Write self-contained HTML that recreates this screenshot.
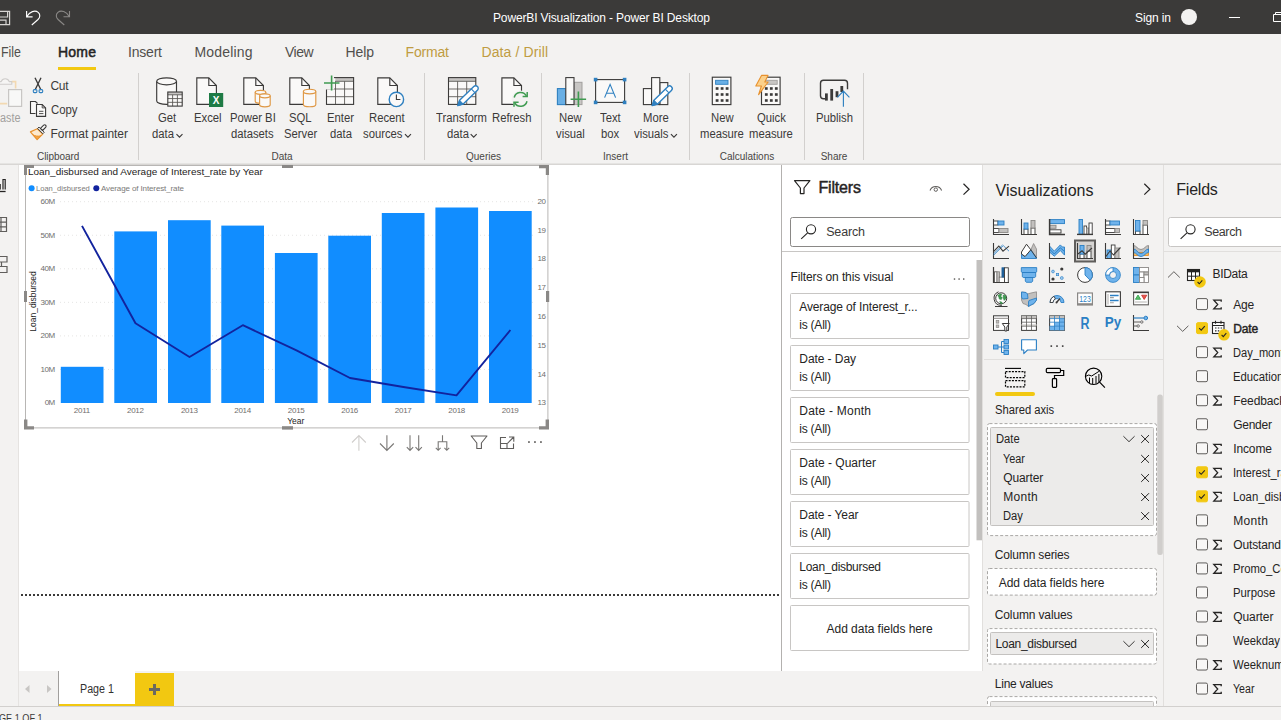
<!DOCTYPE html>
<html lang="en">
<head>
<meta charset="utf-8">
<title>PowerBI Visualization - Power BI Desktop</title>
<style>
*{box-sizing:border-box;margin:0;padding:0}
html,body{width:1281px;height:720px;overflow:hidden;background:#f3f2f1;font-family:"Liberation Sans",sans-serif;color:#252423}
#root{position:relative;width:1281px;height:720px;overflow:hidden}
.a{position:absolute;display:block}
.x{position:absolute;white-space:nowrap;display:block}
svg{overflow:visible}
</style>
</head>
<body>
<div id="root">
<!-- p1_top -->
<div class="a" style="left:0px;top:0px;width:1281px;height:34px;background:#3b3a39;"></div>
<span class="x" style="left:493.00px;top:10.00px;font-size:12px;line-height:16px;color:#ffffff;letter-spacing:-0.142px;">PowerBI Visualization - Power BI Desktop</span>
<span class="x" style="left:1135.00px;top:10.00px;font-size:12px;line-height:16px;color:#ffffff;letter-spacing:-0.115px;">Sign in</span>
<div class="a" style="left:1181px;top:9px;width:16px;height:16px;border-radius:8px;background:#f3f2f1"></div>
<div class="a" style="left:1229px;top:17px;width:11px;height:1px;background:#ffffff;"></div>
<svg class="a" style="left:1270px;top:10px;" width="11" height="14" viewBox="0 0 11 14"><path d="M3.5 4.5h9v7h-9z M5.5 4.5v-2h7" fill="none" stroke="#fff" stroke-width="1"/></svg>
<svg class="a" style="left:0px;top:0px;" width="100" height="34" viewBox="0 0 100 34"><path d="M-3 11.4H9.6V24.6H-3 M7.6 11.4V17H-3 M-3 20.2H6V24.6" fill="none" stroke="#d6d4d2" stroke-width="1.2"/><path d="M26.6 11v5.8h6 M26.9 16.5C29.6 11.6 35 9.7 38.2 12.4c2.4 2.1 1.9 5-0.2 7.1L31.8 25" fill="none" stroke="#ffffff" stroke-width="1.15" stroke-linejoin="miter"/><g transform="translate(96.1 0) scale(-1 1)"><path d="M26.6 11v5.8h6 M26.9 16.5C29.6 11.6 35 9.7 38.2 12.4c2.4 2.1 1.9 5-0.2 7.1L31.8 25" fill="none" stroke="#8a8886" stroke-width="1.1"/></g></svg>
<span class="x" style="left:0.50px;top:43.00px;font-size:14px;line-height:18px;color:#514f4c;transform:scaleX(0.8866);transform-origin:0 50%;">File</span>
<span class="x" style="left:58.00px;top:43.00px;font-size:14px;line-height:18px;color:#252423;letter-spacing:0.218px;-webkit-text-stroke:0.5px #252423;">Home</span>
<span class="x" style="left:128.00px;top:43.00px;font-size:14px;line-height:18px;color:#514f4c;letter-spacing:-0.203px;">Insert</span>
<span class="x" style="left:194.50px;top:43.00px;font-size:14px;line-height:18px;color:#514f4c;letter-spacing:0.169px;">Modeling</span>
<span class="x" style="left:285.00px;top:43.00px;font-size:14px;line-height:18px;color:#514f4c;letter-spacing:-0.464px;">View</span>
<span class="x" style="left:345.50px;top:43.00px;font-size:14px;line-height:18px;color:#514f4c;letter-spacing:-0.098px;">Help</span>
<span class="x" style="left:405.50px;top:43.00px;font-size:14px;line-height:18px;color:#c09c42;letter-spacing:-0.168px;">Format</span>
<span class="x" style="left:481.50px;top:43.00px;font-size:14px;line-height:18px;color:#c09c42;letter-spacing:0.105px;">Data / Drill</span>
<div class="a" style="left:58px;top:67px;width:38px;height:3px;background:#f2c811;"></div>
<div class="a" style="left:0px;top:163px;width:1281px;height:1px;background:#e5e4e2;"></div>
<div class="a" style="left:0px;top:164px;width:1281px;height:1px;background:#d8d6d4;"></div>
<!-- p2_ribbon -->
<svg class="a" style="left:0px;top:0px;" width="1281" height="170" viewBox="0 0 1281 170"><path d="M11.8 81.6H15.6V88.5 M-4 103.6H7.2" fill="none" stroke="#f3d9b1" stroke-width="1.6"/><path d="M-3 84.2v-2.6h4.2a4.2 4.2 0 0 1 8 0h2.6v2.6z" fill="#f6f5f4" stroke="#cfcdcb" stroke-width="1.1" stroke-linejoin="round"/><rect x="8.6" y="89.6" width="13" height="16.8" fill="#f8f8f7" stroke="#c8c6c4" stroke-width="1.2"/><path d="M35 77.8L41 90 M41 77.8L35 90" stroke="#3b3a39" stroke-width="1.35" fill="none"/><rect x="33.3" y="89.6" width="3.6" height="3" rx="1" fill="none" stroke="#2f80c0" stroke-width="1.1"/><rect x="39.1" y="89.6" width="3.6" height="3" rx="1" fill="none" stroke="#2f80c0" stroke-width="1.1"/><path d="M35.5 113.5h-5v-12h5l2 2" fill="#faf9f8" stroke="#3b3a39" stroke-width="1.1"/><path d="M36.5 104.5h5.7l3.4 3.4v8.5h-9.1z" fill="#faf9f8" stroke="#3b3a39" stroke-width="1.1"/><path d="M42.2 104.5v3.4h3.4" fill="none" stroke="#3b3a39" stroke-width="0.9"/><path d="M39 111.3h4.4M39 113.6h4.4" stroke="#3b3a39" stroke-width="0.9"/><path d="M30.4 131.9l6.9-3.2 5.4 5.3-5.6 5.6z" fill="#fde9cd" stroke="#e8912d" stroke-width="1.2" stroke-linejoin="round"/><path d="M32.6 134.6l4.6 4.6 3.4-3.4c-3 0.6-5.6 0.2-8-1.2z" fill="#f2a444" stroke="#e8912d" stroke-width="0.8" stroke-linejoin="round"/><path d="M37.6 128.4l1.4-1.3 5.2 5.2-1.4 1.4z" fill="#faf9f8" stroke="#3b3a39" stroke-width="1"/><path d="M40.4 128.3l3.3-3.2a1.5 1.5 0 0 1 2.1 2.1l-3.2 3.3z" fill="#faf9f8" stroke="#3b3a39" stroke-width="1.1" stroke-linejoin="round"/><path d="M156.7 81.3v19.6a9.9 3.5 0 0 0 19.8 0v-19.6" fill="#faf9f8" stroke="#3b3a39" stroke-width="1.15"/><ellipse cx="166.6" cy="81.3" rx="9.9" ry="3.5" fill="#faf9f8" stroke="#3b3a39" stroke-width="1.15"/><rect x="167.8" y="92" width="14.4" height="14.1" fill="#faf9f8" stroke="none"/><rect x="167.8" y="92" width="14.40" height="2.8" fill="#c6c4c2"/><path d="M172.60 94.80V106.1M177.40 94.80V106.1M167.8 94.80H182.20000000000002M167.8 98.57H182.20000000000002M167.8 102.33H182.20000000000002" fill="none" stroke="#55534f" stroke-width="0.85"/><rect x="167.8" y="92" width="14.4" height="14.1" fill="none" stroke="#3b3a39" stroke-width="1.1"/><path d="M196.79999999999998 77.89999999999999h12.000000000000002l7.6 7.6v18.799999999999997h-19.6z" fill="#faf9f8" stroke="#3b3a39" stroke-width="1.15" stroke-linejoin="miter"/><path d="M208.79999999999998 77.89999999999999v7.6h7.6" fill="none" stroke="#3b3a39" stroke-width="1.15"/><rect x="209" y="93" width="14.2" height="14" fill="#1e7b45"/><path d="M243.79999999999998 77.89999999999999h12.000000000000002l7.6 7.6v18.799999999999997h-19.6z" fill="#faf9f8" stroke="#3b3a39" stroke-width="1.15" stroke-linejoin="miter"/><path d="M255.79999999999998 77.89999999999999v7.6h7.6" fill="none" stroke="#3b3a39" stroke-width="1.15"/><path d="M255.2 92.3v9a5.3 2 0 0 0 10.6 0v-9" fill="#faf9f8" stroke="#df9845" stroke-width="1.15"/><ellipse cx="260.5" cy="92.3" rx="5.3" ry="2" fill="#faf9f8" stroke="#df9845" stroke-width="1.15"/><path d="M259.6 95.8v9a5.3 2 0 0 0 10.6 0v-9" fill="#faf9f8" stroke="#df9845" stroke-width="1.15"/><ellipse cx="264.90000000000003" cy="95.8" rx="5.3" ry="2" fill="#faf9f8" stroke="#df9845" stroke-width="1.15"/><path d="M289.8 77.89999999999999h12.000000000000002l7.6 7.6v18.799999999999997h-19.6z" fill="#faf9f8" stroke="#3b3a39" stroke-width="1.15" stroke-linejoin="miter"/><path d="M301.8 77.89999999999999v7.6h7.6" fill="none" stroke="#3b3a39" stroke-width="1.15"/><path d="M303.4 91.6v12.799999999999999a6.2 2.3 0 0 0 12.4 0v-12.799999999999999" fill="#faf9f8" stroke="#df9845" stroke-width="1.15"/><ellipse cx="309.59999999999997" cy="91.6" rx="6.2" ry="2.3" fill="#faf9f8" stroke="#df9845" stroke-width="1.15"/><rect x="326.5" y="77.6" width="27.1" height="26.8" fill="#faf9f8" stroke="none"/><rect x="335.3" y="77.6" width="18.30" height="3.7" fill="#c6c4c2"/><path d="M335.53 81.30V104.39999999999999M344.57 81.30V104.39999999999999M335.3 81.30H353.6M326.5 89.00H353.6M326.5 96.70H353.6" fill="none" stroke="#55534f" stroke-width="0.85"/><rect x="326.5" y="77.6" width="27.1" height="26.8" fill="none" stroke="#3b3a39" stroke-width="1.1"/><rect x="324" y="76" width="10" height="13.5" fill="#f3f2f1"/><path d="M331.6 75.5v15 M324 83h15.5" stroke="#3f9b51" stroke-width="1.6" fill="none"/><path d="M377.8 77.89999999999999h12.000000000000002l7.6 7.6v18.799999999999997h-19.6z" fill="#faf9f8" stroke="#3b3a39" stroke-width="1.15" stroke-linejoin="miter"/><path d="M389.8 77.89999999999999v7.6h7.6" fill="none" stroke="#3b3a39" stroke-width="1.15"/><circle cx="396.4" cy="99.4" r="7.2" fill="#faf9f8" stroke="#2f80c0" stroke-width="1.4"/><path d="M396.4 94.5v5h4" fill="none" stroke="#3b3a39" stroke-width="1.1"/><rect x="448.5" y="77.6" width="27.3" height="26.8" fill="#faf9f8" stroke="none"/><rect x="448.5" y="77.6" width="27.30" height="3.7" fill="#c6c4c2"/><path d="M457.60 81.30V104.39999999999999M466.70 81.30V104.39999999999999M448.5 81.30H475.8M448.5 89.00H475.8M448.5 96.70H475.8" fill="none" stroke="#55534f" stroke-width="0.85"/><rect x="448.5" y="77.6" width="27.3" height="26.8" fill="none" stroke="#3b3a39" stroke-width="1.1"/><path d="M473.79 86.53A2.6 2.6 0 0 1 477.41 90.27L463.20 104.00L457.80 105.60L459.59 100.26Z" fill="#ffffff" stroke="#2f80c0" stroke-width="1.4" stroke-linejoin="round"/><path d="M463.20 104.00L457.80 105.60L459.59 100.26Z" fill="#2f80c0" stroke="#2f80c0" stroke-width="1"/><path d="M471.28 88.96L474.89 92.70" stroke="#2f80c0" stroke-width="1.1"/><path d="M501.90000000000003 77.89999999999999h12.000000000000002l7.6 7.6v18.799999999999997h-19.6z" fill="#faf9f8" stroke="#3b3a39" stroke-width="1.15" stroke-linejoin="miter"/><path d="M513.9 77.89999999999999v7.6h7.6" fill="none" stroke="#3b3a39" stroke-width="1.15"/><circle cx="520.6" cy="99.4" r="9" fill="#f3f2f1"/><path d="M514.2 97.5a6.6 6.6 0 0 1 12.2-1.6 M527 101.3a6.6 6.6 0 0 1-12.2 1.6" fill="none" stroke="#3f9b51" stroke-width="1.5"/><path d="M527.2 92v4.6h-4.6 M514 106.8v-4.6h4.6" fill="none" stroke="#3f9b51" stroke-width="1.5"/><rect x="574" y="82.3" width="8" height="22.3" fill="#c8c6c4" stroke="#a19f9d" stroke-width="1"/><rect x="557.4" y="88.6" width="8.4" height="16" fill="#69afe5" stroke="#2f80c0" stroke-width="1.1"/><rect x="565.8" y="77.6" width="8.2" height="27" fill="#faf9f8" stroke="#3b3a39" stroke-width="1.1"/><path d="M578.4 91.5v15.5 M570.6 99.3h15.5" stroke="#3f9b51" stroke-width="1.6"/><rect x="595.6" y="79.6" width="29" height="22.8" fill="#faf9f8" stroke="#3b3a39" stroke-width="1.1"/><rect x="593.8000000000001" y="77.8" width="3.6" height="3.6" fill="#2f80c0"/><rect x="622.8000000000001" y="77.8" width="3.6" height="3.6" fill="#2f80c0"/><rect x="593.8000000000001" y="100.60000000000001" width="3.6" height="3.6" fill="#2f80c0"/><rect x="622.8000000000001" y="100.60000000000001" width="3.6" height="3.6" fill="#2f80c0"/><path d="M604.6 97.6l5.5-13.2l5.5 13.2 M606.5 93.2h7.2" fill="none" stroke="#2f80c0" stroke-width="1.15"/><rect x="659.8" y="82.6" width="8" height="22" fill="#faf9f8" stroke="#3b3a39" stroke-width="1.1"/><rect x="643.4" y="88.6" width="8.2" height="16" fill="#faf9f8" stroke="#3b3a39" stroke-width="1.1"/><rect x="651.6" y="77.6" width="8.2" height="27" fill="#faf9f8" stroke="#3b3a39" stroke-width="1.1"/><path d="M667.78 86.74A2.6 2.6 0 0 1 671.42 90.46L657.59 103.97L652.20 105.60L653.96 100.25Z" fill="#ffffff" stroke="#2f80c0" stroke-width="1.4" stroke-linejoin="round"/><path d="M657.59 103.97L652.20 105.60L653.96 100.25Z" fill="#2f80c0" stroke="#2f80c0" stroke-width="1"/><path d="M665.28 89.19L668.91 92.91" stroke="#2f80c0" stroke-width="1.1"/><rect x="712.3" y="77.2" width="18.6" height="27.4" fill="#faf9f8" stroke="#3b3a39" stroke-width="1.15"/><rect x="715.5999999999999" y="80.3" width="12.4" height="4" fill="#69afe5" stroke="#2f80c0" stroke-width="0.9"/><rect x="715.7" y="87.2" width="2.8" height="2.6" fill="#3b3a39"/><rect x="715.7" y="93.2" width="2.8" height="2.6" fill="#3b3a39"/><rect x="715.7" y="99.2" width="2.8" height="2.6" fill="#3b3a39"/><rect x="720.7" y="87.2" width="2.8" height="2.6" fill="#3b3a39"/><rect x="720.7" y="93.2" width="2.8" height="2.6" fill="#3b3a39"/><rect x="720.7" y="99.2" width="2.8" height="2.6" fill="#3b3a39"/><rect x="725.7" y="87.2" width="2.8" height="2.6" fill="#3b3a39"/><rect x="725.7" y="93.2" width="2.8" height="2.6" fill="#3b3a39"/><rect x="725.7" y="99.2" width="2.8" height="2.6" fill="#3b3a39"/><rect x="761.5" y="77.2" width="18.6" height="27.4" fill="#faf9f8" stroke="#3b3a39" stroke-width="1.15"/><rect x="764.8" y="80.3" width="12.4" height="4" fill="#c8c6c4" stroke="#a19f9d" stroke-width="0.9"/><rect x="764.9" y="87.2" width="2.8" height="2.6" fill="#3b3a39"/><rect x="764.9" y="93.2" width="2.8" height="2.6" fill="#3b3a39"/><rect x="764.9" y="99.2" width="2.8" height="2.6" fill="#3b3a39"/><rect x="769.9" y="87.2" width="2.8" height="2.6" fill="#3b3a39"/><rect x="769.9" y="93.2" width="2.8" height="2.6" fill="#3b3a39"/><rect x="769.9" y="99.2" width="2.8" height="2.6" fill="#3b3a39"/><rect x="774.9" y="87.2" width="2.8" height="2.6" fill="#3b3a39"/><rect x="774.9" y="93.2" width="2.8" height="2.6" fill="#3b3a39"/><rect x="774.9" y="99.2" width="2.8" height="2.6" fill="#3b3a39"/><path d="M761.5 75.4l6.5 0-3.2 6.6 3.4 0-9.6 12.6 2.8-8.6-5.6 0z" fill="#fbd08a" stroke="#e8912d" stroke-width="1.1" stroke-linejoin="round"/><path d="M826.5 98.8h-3a3 3 0 0 1-3-3v-12.5a3 3 0 0 1 3-3h21a3 3 0 0 1 3 3v6" fill="none" stroke="#3b3a39" stroke-width="1.4"/><rect x="825" y="93.4" width="2.8" height="7.2" fill="#3b3a39"/><rect x="830.3" y="89" width="2.8" height="11.6" fill="#3b3a39"/><rect x="835.6" y="91.2" width="2.8" height="6" fill="#3b3a39"/><rect x="840.4" y="86" width="2.8" height="6" fill="#3b3a39"/><path d="M843.4 106.8v-15.4 M837.4 97.4l6-6.2l6 6.2" fill="none" stroke="#2f80c0" stroke-width="1.15"/><path d="M176.47711437499999 134.2l3 3l3-3" fill="none" stroke="#3b3a39" stroke-width="1.15"/><path d="M404.94837187499996 134.2l3 3l3-3" fill="none" stroke="#3b3a39" stroke-width="1.15"/><path d="M470.677114375 134.2l3 3l3-3" fill="none" stroke="#3b3a39" stroke-width="1.15"/><path d="M670.93954125 134.2l3 3l3-3" fill="none" stroke="#3b3a39" stroke-width="1.15"/></svg>
<span class="x" style="left:-0.50px;top:110.00px;font-size:12px;line-height:16px;color:#a19f9d;transform:scaleX(0.9038);transform-origin:0 50%;">aste</span>
<span class="x" style="left:50.50px;top:78.00px;font-size:12px;line-height:16px;color:#3b3a39;letter-spacing:-0.337px;">Cut</span>
<span class="x" style="left:50.50px;top:102.00px;font-size:12px;line-height:16px;color:#3b3a39;transform:scaleX(0.9460);transform-origin:0 50%;">Copy</span>
<span class="x" style="left:50.50px;top:126.00px;font-size:12px;line-height:16px;color:#3b3a39;letter-spacing:-0.041px;">Format painter</span>
<span class="x" style="left:37.00px;top:150.00px;font-size:10px;line-height:13px;color:#484644;letter-spacing:-0.063px;">Clipboard</span>
<div class="a" style="left:138.0px;top:73px;width:1px;height:87px;background:#d2d0ce;"></div>
<div class="a" style="left:424.2px;top:73px;width:1px;height:87px;background:#d2d0ce;"></div>
<div class="a" style="left:540.9px;top:73px;width:1px;height:87px;background:#d2d0ce;"></div>
<div class="a" style="left:689.2px;top:73px;width:1px;height:87px;background:#d2d0ce;"></div>
<div class="a" style="left:804.0px;top:73px;width:1px;height:87px;background:#d2d0ce;"></div>
<div class="a" style="left:863.0px;top:73px;width:1px;height:87px;background:#d2d0ce;"></div>
<span class="x" style="left:212.76px;top:94.00px;font-size:10px;line-height:13px;color:#ffffff;font-weight:bold;">X</span>
<span class="x" style="left:158.21px;top:110.00px;font-size:12px;line-height:16px;color:#3b3a39;transform:scaleX(0.9400);transform-origin:0 50%;">Get</span>
<span class="x" style="left:152.32px;top:126.00px;font-size:12px;line-height:16px;color:#3b3a39;transform:scaleX(0.9400);transform-origin:0 50%;">data</span>
<span class="x" style="left:193.51px;top:110.00px;font-size:12px;line-height:16px;color:#3b3a39;transform:scaleX(0.9400);transform-origin:0 50%;">Excel</span>
<span class="x" style="left:229.62px;top:110.00px;font-size:12px;line-height:16px;color:#3b3a39;transform:scaleX(0.9400);transform-origin:0 50%;">Power BI</span>
<span class="x" style="left:231.18px;top:126.00px;font-size:12px;line-height:16px;color:#3b3a39;transform:scaleX(0.9400);transform-origin:0 50%;">datasets</span>
<span class="x" style="left:289.21px;top:110.00px;font-size:12px;line-height:16px;color:#3b3a39;transform:scaleX(0.9400);transform-origin:0 50%;">SQL</span>
<span class="x" style="left:283.89px;top:126.00px;font-size:12px;line-height:16px;color:#3b3a39;transform:scaleX(0.9400);transform-origin:0 50%;">Server</span>
<span class="x" style="left:327.02px;top:110.00px;font-size:12px;line-height:16px;color:#3b3a39;transform:scaleX(0.9400);transform-origin:0 50%;">Enter</span>
<span class="x" style="left:329.52px;top:126.00px;font-size:12px;line-height:16px;color:#3b3a39;transform:scaleX(0.9400);transform-origin:0 50%;">data</span>
<span class="x" style="left:369.13px;top:110.00px;font-size:12px;line-height:16px;color:#3b3a39;transform:scaleX(0.9400);transform-origin:0 50%;">Recent</span>
<span class="x" style="left:363.25px;top:126.00px;font-size:12px;line-height:16px;color:#3b3a39;transform:scaleX(0.9400);transform-origin:0 50%;">sources</span>
<span class="x" style="left:436.01px;top:110.00px;font-size:12px;line-height:16px;color:#3b3a39;transform:scaleX(0.9400);transform-origin:0 50%;">Transform</span>
<span class="x" style="left:446.52px;top:126.00px;font-size:12px;line-height:16px;color:#3b3a39;transform:scaleX(0.9400);transform-origin:0 50%;">data</span>
<span class="x" style="left:491.75px;top:110.00px;font-size:12px;line-height:16px;color:#3b3a39;transform:scaleX(0.9400);transform-origin:0 50%;">Refresh</span>
<span class="x" style="left:558.92px;top:110.00px;font-size:12px;line-height:16px;color:#3b3a39;transform:scaleX(0.9400);transform-origin:0 50%;">New</span>
<span class="x" style="left:555.78px;top:126.00px;font-size:12px;line-height:16px;color:#3b3a39;transform:scaleX(0.9400);transform-origin:0 50%;">visual</span>
<span class="x" style="left:600.16px;top:110.00px;font-size:12px;line-height:16px;color:#3b3a39;transform:scaleX(0.9400);transform-origin:0 50%;">Text</span>
<span class="x" style="left:601.41px;top:126.00px;font-size:12px;line-height:16px;color:#3b3a39;transform:scaleX(0.9400);transform-origin:0 50%;">box</span>
<span class="x" style="left:642.65px;top:110.00px;font-size:12px;line-height:16px;color:#3b3a39;transform:scaleX(0.9400);transform-origin:0 50%;">More</span>
<span class="x" style="left:634.26px;top:126.00px;font-size:12px;line-height:16px;color:#3b3a39;transform:scaleX(0.9400);transform-origin:0 50%;">visuals</span>
<span class="x" style="left:711.02px;top:110.00px;font-size:12px;line-height:16px;color:#3b3a39;transform:scaleX(0.9400);transform-origin:0 50%;">New</span>
<span class="x" style="left:700.36px;top:126.00px;font-size:12px;line-height:16px;color:#3b3a39;transform:scaleX(0.9400);transform-origin:0 50%;">measure</span>
<span class="x" style="left:756.88px;top:110.00px;font-size:12px;line-height:16px;color:#3b3a39;transform:scaleX(0.9400);transform-origin:0 50%;">Quick</span>
<span class="x" style="left:749.36px;top:126.00px;font-size:12px;line-height:16px;color:#3b3a39;transform:scaleX(0.9400);transform-origin:0 50%;">measure</span>
<span class="x" style="left:815.70px;top:110.00px;font-size:12px;line-height:16px;color:#3b3a39;transform:scaleX(0.9400);transform-origin:0 50%;">Publish</span>
<span class="x" style="left:271.44px;top:150.00px;font-size:10px;line-height:13px;color:#484644;">Data</span>
<span class="x" style="left:465.99px;top:150.00px;font-size:10px;line-height:13px;color:#484644;">Queries</span>
<span class="x" style="left:603.00px;top:150.00px;font-size:10px;line-height:13px;color:#484644;">Insert</span>
<span class="x" style="left:719.76px;top:150.00px;font-size:10px;line-height:13px;color:#484644;">Calculations</span>
<span class="x" style="left:820.66px;top:150.00px;font-size:10px;line-height:13px;color:#484644;">Share</span>
<!-- p3_canvas -->
<div class="a" style="left:0px;top:165px;width:18px;height:541px;background:#f3f2f1;"></div>
<div class="a" style="left:18px;top:165px;width:1px;height:541px;background:#e5e3e1;"></div>
<div class="a" style="left:19px;top:165px;width:762px;height:506px;background:#ffffff;"></div>
<div class="a" style="left:21px;top:594px;width:758px;height:2px;background:repeating-linear-gradient(to right,#3b3a39 0,#3b3a39 2px,transparent 2px,transparent 4px);"></div>
<svg class="a" style="left:0px;top:0px;" width="1281" height="720" viewBox="0 0 1281 720"><path d="M-3 191.5h8.6" stroke="#252423" stroke-width="1.3"/><path d="M-2 189.5v-5h2.2v5 M3 189.5v-10h2.2v10" fill="none" stroke="#252423" stroke-width="1.2"/><path d="M-4 217.5h10.5v14h-10.5 M-4 222.2h10.5 M-4 226.8h10.5 M1 217.5v14" fill="none" stroke="#605e5c" stroke-width="1.2"/><path d="M-4 256.5h11v5.5h-11 M-4 266.5h11v6h-11 M1.5 262v4.5" fill="none" stroke="#605e5c" stroke-width="1.2"/><rect x="25.5" y="165.5" width="522.4" height="262.4" fill="#ffffff" stroke="#b8b6b4" stroke-width="1"/><path d="M24 165h10v3h-7v7h-3z" fill="#8a8886"/><path d="M549 165h-10v3.2h6.8v6.8h3.2z" fill="#8a8886"/><path d="M24 429.6h10v-3.4h-6.6v-6.6h-3.4z" fill="#8a8886"/><path d="M549 429.6h-10v-3.4h6.6v-6.6h3.4z" fill="#8a8886"/><rect x="282" y="165" width="11" height="3" fill="#8a8886"/><rect x="282" y="426.2" width="11" height="3.4" fill="#8a8886"/><rect x="24" y="291" width="3" height="11" fill="#8a8886"/><rect x="546" y="291" width="3.2" height="11" fill="#8a8886"/><path d="M60 369.45H533" stroke="#e6e5e4" stroke-width="1" stroke-dasharray="1 3"/><path d="M60 335.90H533" stroke="#e6e5e4" stroke-width="1" stroke-dasharray="1 3"/><path d="M60 302.35H533" stroke="#e6e5e4" stroke-width="1" stroke-dasharray="1 3"/><path d="M60 268.80H533" stroke="#e6e5e4" stroke-width="1" stroke-dasharray="1 3"/><path d="M60 235.25H533" stroke="#e6e5e4" stroke-width="1" stroke-dasharray="1 3"/><path d="M60 201.70H533" stroke="#e6e5e4" stroke-width="1" stroke-dasharray="1 3"/><rect x="60.8" y="366.8" width="42.7" height="36.20" fill="#118dff"/><rect x="114.3" y="231.4" width="42.7" height="171.60" fill="#118dff"/><rect x="168" y="220.2" width="42.7" height="182.80" fill="#118dff"/><rect x="221.3" y="225.6" width="42.7" height="177.40" fill="#118dff"/><rect x="274.9" y="253" width="42.7" height="150.00" fill="#118dff"/><rect x="328.3" y="235.7" width="42.7" height="167.30" fill="#118dff"/><rect x="381.8" y="213" width="42.7" height="190.00" fill="#118dff"/><rect x="435.4" y="207.5" width="42.7" height="195.50" fill="#118dff"/><rect x="489" y="211" width="42.7" height="192.00" fill="#118dff"/><polyline points="82,225.9 135.5,323.3 189.5,357 242.8,325.2 296.5,350.4 350,378 403.4,387 456.5,395.4 510.4,330" fill="none" stroke="#12239e" stroke-width="1.9" stroke-linejoin="round"/><circle cx="31.6" cy="188.3" r="3" fill="#118dff"/><circle cx="96.3" cy="188.3" r="3" fill="#12239e"/><path d="M358.9 450.7v-15 M352 442.5l6.9-6.9l6.9 6.9" fill="none" stroke="#d0cecc" stroke-width="1.1"/><path d="M386.9 435.3v15 M380 443.5l6.9 6.9l6.9-6.9" fill="none" stroke="#7a7876" stroke-width="1.1"/><path d="M410 435.3v15 M406.8 447.2l3.2 3.2l3.2-3.2 M418.7 435.3v15 M415.5 447.2l3.2 3.2l3.2-3.2" fill="none" stroke="#7a7876" stroke-width="1.1"/><path d="M442.5 435.3v6.5 M438.2 450.3v-8.5h8.6v8.5 M435.8 447.9l2.4 2.4l2.4-2.4 M444.4 447.9l2.4 2.4l2.4-2.4" fill="none" stroke="#7a7876" stroke-width="1.1"/><path d="M471.2 436h15.8l-5.6 7v5.5h-4.6v-5.5z" fill="none" stroke="#605e5c" stroke-width="1.1" stroke-linejoin="round"/><path d="M506 437.5h-5.5v11h13v-5 M500.5 443.5h6.5v5 M509 437h4.8v4.8 M513.8 437l-6.3 6.3" fill="none" stroke="#605e5c" stroke-width="1.1"/><rect x="528.1" y="441.2" width="1.7" height="1.7" fill="#605e5c"/><rect x="534.1" y="441.2" width="1.7" height="1.7" fill="#605e5c"/><rect x="540.1" y="441.2" width="1.7" height="1.7" fill="#605e5c"/></svg>
<span class="x" style="left:27.90px;top:166.00px;font-size:9px;line-height:12px;color:#252423;transform:scaleX(1.1050);transform-origin:0 50%;">Loan_disbursed and Average of Interest_rate by Year</span>
<span class="x" style="left:36.00px;top:184.00px;font-size:8px;line-height:10px;color:#7a7977;transform:scaleX(0.9450);transform-origin:0 50%;">Loan_disbursed</span>
<span class="x" style="left:101.00px;top:184.00px;font-size:8px;line-height:10px;color:#7a7977;letter-spacing:-0.117px;">Average of Interest_rate</span>
<span class="x" style="left:44.64px;top:398.00px;font-size:8px;line-height:10px;color:#6f6e6c;letter-spacing:-0.556px;">0M</span>
<span class="x" style="left:40.42px;top:365.00px;font-size:8px;line-height:10px;color:#6f6e6c;letter-spacing:-0.389px;">10M</span>
<span class="x" style="left:40.42px;top:331.00px;font-size:8px;line-height:10px;color:#6f6e6c;letter-spacing:-0.389px;">20M</span>
<span class="x" style="left:40.42px;top:298.00px;font-size:8px;line-height:10px;color:#6f6e6c;letter-spacing:-0.389px;">30M</span>
<span class="x" style="left:40.42px;top:264.00px;font-size:8px;line-height:10px;color:#6f6e6c;letter-spacing:-0.389px;">40M</span>
<span class="x" style="left:40.42px;top:231.00px;font-size:8px;line-height:10px;color:#6f6e6c;letter-spacing:-0.389px;">50M</span>
<span class="x" style="left:40.42px;top:197.00px;font-size:8px;line-height:10px;color:#6f6e6c;letter-spacing:-0.389px;">60M</span>
<span class="x" style="left:537.50px;top:398.00px;font-size:8px;line-height:10px;color:#6f6e6c;letter-spacing:-0.445px;">13</span>
<span class="x" style="left:537.50px;top:370.00px;font-size:8px;line-height:10px;color:#6f6e6c;letter-spacing:-0.445px;">14</span>
<span class="x" style="left:537.50px;top:341.00px;font-size:8px;line-height:10px;color:#6f6e6c;letter-spacing:-0.445px;">15</span>
<span class="x" style="left:537.50px;top:312.00px;font-size:8px;line-height:10px;color:#6f6e6c;letter-spacing:-0.445px;">16</span>
<span class="x" style="left:537.50px;top:283.00px;font-size:8px;line-height:10px;color:#6f6e6c;letter-spacing:-0.445px;">17</span>
<span class="x" style="left:537.50px;top:254.00px;font-size:8px;line-height:10px;color:#6f6e6c;letter-spacing:-0.445px;">18</span>
<span class="x" style="left:537.50px;top:226.00px;font-size:8px;line-height:10px;color:#6f6e6c;letter-spacing:-0.445px;">19</span>
<span class="x" style="left:537.50px;top:197.00px;font-size:8px;line-height:10px;color:#6f6e6c;letter-spacing:-0.445px;">20</span>
<span class="x" style="left:73.83px;top:406.00px;font-size:8px;line-height:10px;color:#6f6e6c;letter-spacing:-0.287px;">2011</span>
<span class="x" style="left:127.05px;top:406.00px;font-size:8px;line-height:10px;color:#6f6e6c;letter-spacing:-0.297px;">2012</span>
<span class="x" style="left:180.95px;top:406.00px;font-size:8px;line-height:10px;color:#6f6e6c;letter-spacing:-0.297px;">2013</span>
<span class="x" style="left:234.25px;top:406.00px;font-size:8px;line-height:10px;color:#6f6e6c;letter-spacing:-0.297px;">2014</span>
<span class="x" style="left:287.85px;top:406.00px;font-size:8px;line-height:10px;color:#6f6e6c;letter-spacing:-0.297px;">2015</span>
<span class="x" style="left:341.35px;top:406.00px;font-size:8px;line-height:10px;color:#6f6e6c;letter-spacing:-0.297px;">2016</span>
<span class="x" style="left:394.85px;top:406.00px;font-size:8px;line-height:10px;color:#6f6e6c;letter-spacing:-0.297px;">2017</span>
<span class="x" style="left:448.35px;top:406.00px;font-size:8px;line-height:10px;color:#6f6e6c;letter-spacing:-0.297px;">2018</span>
<span class="x" style="left:501.85px;top:406.00px;font-size:8px;line-height:10px;color:#6f6e6c;letter-spacing:-0.297px;">2019</span>
<span class="x" style="left:287.21px;top:416.00px;font-size:8.5px;line-height:11px;color:#252423;">Year</span>
<span class="x" style="left:2.95px;top:296.00px;font-size:8.5px;line-height:11px;color:#252423;transform:rotate(-90deg);transform-origin:50% 50%">Loan_disbursed</span>
<div class="a" style="left:19px;top:671px;width:762px;height:35px;background:#f3f2f1;"></div>
<div class="a" style="left:58px;top:671px;width:77px;height:35px;background:#ffffff;"></div>
<div class="a" style="left:58px;top:671px;width:1px;height:35px;background:#a19f9d;"></div>
<div class="a" style="left:59px;top:704px;width:76px;height:2px;background:#f2c811;"></div>
<div class="a" style="left:135px;top:673px;width:39px;height:33px;background:#f2c811;"></div>
<div class="a" style="left:149px;top:688.2px;width:11px;height:2.4px;background:#6b695f;"></div><div class="a" style="left:153.3px;top:684px;width:2.4px;height:11px;background:#6b695f;"></div>
<span class="x" style="left:79.70px;top:681.00px;font-size:12.5px;line-height:16px;color:#323130;transform:scaleX(0.8557);transform-origin:0 50%;">Page 1</span>
<svg class="a" style="left:20px;top:680px;" width="40" height="18" viewBox="0 0 40 18"><path d="M9.5 5v8l-4.5-4z M27 5v8l4.5-4z" fill="#c8c6c4"/></svg>
<div class="a" style="left:0px;top:706px;width:1281px;height:14px;background:#f3f2f1;"></div>
<div class="a" style="left:0px;top:706px;width:1281px;height:1px;background:#d2d0ce;"></div>
<span class="x" style="left:-1.00px;top:711.00px;font-size:11px;line-height:14px;color:#3b3a39;transform:scaleX(0.8293);transform-origin:0 50%;">GE 1 OF 1</span>
<!-- p4_filters -->
<div class="a" style="left:781px;top:165px;width:202px;height:506px;background:#ffffff;"></div>
<div class="a" style="left:781px;top:165px;width:1px;height:506px;background:#b3b1af;"></div>
<div class="a" style="left:982px;top:165px;width:1px;height:541px;background:#e1dfdd;"></div>
<div class="a" style="left:781px;top:671px;width:202px;height:35px;background:#f3f2f1;"></div>
<svg class="a" style="left:0px;top:0px;" width="1281" height="720" viewBox="0 0 1281 720"><path d="M794.5 180.6h15.4l-5.9 7.4v5.6h-3.6v-5.6z" fill="none" stroke="#252423" stroke-width="1.2" stroke-linejoin="round"/><path d="M930 190.5a6.2 6.2 0 0 1 11.6 0" fill="none" stroke="#605e5c" stroke-width="1.1"/><circle cx="935.8" cy="189.6" r="1.7" fill="none" stroke="#605e5c" stroke-width="1"/><path d="M963.5 183.8l5.6 5.4l-5.6 5.4" fill="none" stroke="#252423" stroke-width="1.2"/><rect x="790.5" y="217.5" width="179" height="29" rx="2" fill="#ffffff" stroke="#8a8886" stroke-width="1"/><circle cx="811" cy="229.3" r="4.6" fill="none" stroke="#252423" stroke-width="1.1"/><path d="M807.6 232.8l-6.4 6" stroke="#252423" stroke-width="1.1"/><path d="M782 251.5H982" stroke="#c8c6c4" stroke-width="1"/><rect x="976.5" y="260" width="5.5" height="280.3" fill="#c2c0be"/><rect x="953.8" y="278.3" width="1.4" height="1.5" fill="#605e5c"/><rect x="958.4" y="278.3" width="1.4" height="1.5" fill="#605e5c"/><rect x="963.0" y="278.3" width="1.4" height="1.5" fill="#605e5c"/><rect x="790.5" y="293.5" width="178.5" height="45" rx="1" fill="#ffffff" stroke="#c8c6c4" stroke-width="1"/><rect x="790.5" y="345.5" width="178.5" height="45" rx="1" fill="#ffffff" stroke="#c8c6c4" stroke-width="1"/><rect x="790.5" y="397.5" width="178.5" height="45" rx="1" fill="#ffffff" stroke="#c8c6c4" stroke-width="1"/><rect x="790.5" y="449.5" width="178.5" height="45" rx="1" fill="#ffffff" stroke="#c8c6c4" stroke-width="1"/><rect x="790.5" y="501.5" width="178.5" height="45" rx="1" fill="#ffffff" stroke="#c8c6c4" stroke-width="1"/><rect x="790.5" y="553.5" width="178.5" height="45" rx="1" fill="#ffffff" stroke="#c8c6c4" stroke-width="1"/><rect x="790.5" y="605.5" width="178.5" height="45" rx="1" fill="#ffffff" stroke="#c8c6c4" stroke-width="1"/></svg>
<span class="x" style="left:818.50px;top:177.00px;font-size:16px;line-height:21px;color:#252423;letter-spacing:-0.176px;-webkit-text-stroke:0.45px #252423;">Filters</span>
<span class="x" style="left:826.20px;top:224.00px;font-size:12.5px;line-height:16px;color:#3b3a39;letter-spacing:-0.161px;">Search</span>
<span class="x" style="left:790.50px;top:269.00px;font-size:12px;line-height:16px;color:#252423;letter-spacing:-0.118px;">Filters on this visual</span>
<span class="x" style="left:799.30px;top:299.00px;font-size:12px;line-height:16px;color:#252423;letter-spacing:-0.130px;">Average of Interest_r...</span>
<span class="x" style="left:799.30px;top:317.00px;font-size:12px;line-height:16px;color:#252423;letter-spacing:-0.233px;">is (All)</span>
<span class="x" style="left:799.30px;top:351.00px;font-size:12px;line-height:16px;color:#252423;letter-spacing:-0.072px;">Date - Day</span>
<span class="x" style="left:799.30px;top:369.00px;font-size:12px;line-height:16px;color:#252423;letter-spacing:-0.233px;">is (All)</span>
<span class="x" style="left:799.30px;top:403.00px;font-size:12px;line-height:16px;color:#252423;letter-spacing:0.212px;">Date - Month</span>
<span class="x" style="left:799.30px;top:421.00px;font-size:12px;line-height:16px;color:#252423;letter-spacing:-0.233px;">is (All)</span>
<span class="x" style="left:799.30px;top:455.00px;font-size:12px;line-height:16px;color:#252423;">Date - Quarter</span>
<span class="x" style="left:799.30px;top:473.00px;font-size:12px;line-height:16px;color:#252423;letter-spacing:-0.233px;">is (All)</span>
<span class="x" style="left:799.30px;top:507.00px;font-size:12px;line-height:16px;color:#252423;letter-spacing:-0.084px;">Date - Year</span>
<span class="x" style="left:799.30px;top:525.00px;font-size:12px;line-height:16px;color:#252423;letter-spacing:-0.233px;">is (All)</span>
<span class="x" style="left:799.30px;top:559.00px;font-size:12px;line-height:16px;color:#252423;letter-spacing:-0.285px;">Loan_disbursed</span>
<span class="x" style="left:799.30px;top:577.00px;font-size:12px;line-height:16px;color:#252423;letter-spacing:-0.233px;">is (All)</span>
<span class="x" style="left:826.60px;top:621.00px;font-size:12px;line-height:16px;color:#252423;letter-spacing:-0.039px;">Add data fields here</span>
<!-- p4b_vizpane -->
<div class="a" style="left:983px;top:165px;width:181px;height:541px;background:#f3f2f1;"></div>
<div class="a" style="left:1163px;top:165px;width:1px;height:541px;background:#e1dfdd;"></div>
<div class="a" style="left:983px;top:165px;width:181px;height:541px;overflow:hidden"><svg class="a" style="left:-983px;top:-165px;" width="1281" height="720" viewBox="0 0 1281 720"><path d="M1144.3 183.8l5.6 5.4l-5.6 5.4" fill="none" stroke="#252423" stroke-width="1.2"/><path d="M984 359.5H1163" stroke="#e1dfdd" stroke-width="1"/><path d="M1005 368.4h16" stroke="#000" stroke-width="1.1"/><rect x="1005.5" y="371.6" width="19.3" height="6" fill="none" stroke="#000" stroke-width="1.2" stroke-dasharray="2 1.2"/><rect x="1005.5" y="380.6" width="19.3" height="6.2" fill="none" stroke="#000" stroke-width="1.2" stroke-dasharray="2 1.2"/><rect x="1046.3" y="368.4" width="14.2" height="4.2" rx="1.2" fill="none" stroke="#000" stroke-width="1.2"/><path d="M1060.5 370.5h3.2v5h-9.2v3" fill="none" stroke="#000" stroke-width="1.2"/><rect x="1052.4" y="378.6" width="4.2" height="8.8" rx="0.8" fill="none" stroke="#000" stroke-width="1.2"/><circle cx="1093.6" cy="376.3" r="8.2" fill="none" stroke="#000" stroke-width="1.1"/><path d="M1099.6 382.2l5.3 5.4" stroke="#000" stroke-width="1.2"/><path d="M1085.6 376.4l3.1-1.4 3 1 7.2-4.6" fill="none" stroke="#000" stroke-width="1"/><path d="M1089.5 377.5v5.4 M1092.7 378v6 M1096 376v7.7 M1098.9 374v8" stroke="#000" stroke-width="1"/><rect x="1157.3" y="394.5" width="5.5" height="160.5" rx="2.5" fill="#d0cecc"/><rect x="987.5" y="423.6" width="169" height="112" rx="2" fill="#ffffff" stroke="#a9a7a5" stroke-width="1" stroke-dasharray="3 2"/><rect x="990.5" y="427.5" width="163" height="98" rx="1" fill="#ecebea" stroke="#c4c2c0" stroke-width="1"/><path d="M1123.4 436.2l5.6 5.5l5.6-5.5" fill="none" stroke="#3b3a39" stroke-width="1"/><path d="M1141.1999999999998 435.1l7.8 7.8 M1149.0 435.1l-7.8 7.8" stroke="#252423" stroke-width="1"/><path d="M1141.1999999999998 455.0l7.8 7.8 M1149.0 455.0l-7.8 7.8" stroke="#252423" stroke-width="1"/><path d="M1141.1999999999998 474.1l7.8 7.8 M1149.0 474.1l-7.8 7.8" stroke="#252423" stroke-width="1"/><path d="M1141.1999999999998 493.20000000000005l7.8 7.8 M1149.0 493.20000000000005l-7.8 7.8" stroke="#252423" stroke-width="1"/><path d="M1141.1999999999998 512.2l7.8 7.8 M1149.0 512.2l-7.8 7.8" stroke="#252423" stroke-width="1"/><rect x="987.5" y="568.5" width="169" height="26.6" rx="2" fill="#ffffff" stroke="#a9a7a5" stroke-width="1" stroke-dasharray="3 2"/><rect x="987.5" y="628.6" width="169" height="35.4" rx="2" fill="#ffffff" stroke="#a9a7a5" stroke-width="1" stroke-dasharray="3 2"/><rect x="990.5" y="632.5" width="163" height="22" rx="1" fill="#ecebea" stroke="#c4c2c0" stroke-width="1"/><path d="M1123.4 641.2l5.6 5.5l5.6-5.5" fill="none" stroke="#3b3a39" stroke-width="1"/><path d="M1141.1999999999998 640.1l7.8 7.8 M1149.0 640.1l-7.8 7.8" stroke="#252423" stroke-width="1"/><rect x="987.5" y="696.6" width="169" height="30" rx="2" fill="#ffffff" stroke="#a9a7a5" stroke-width="1" stroke-dasharray="3 2"/><rect x="990.5" y="701.5" width="163" height="22" rx="1" fill="#ecebea" stroke="#c4c2c0" stroke-width="1"/></svg></div>
<div class="a" style="left:995px;top:392px;width:40px;height:4px;background:#f2c811;border-radius:2px;"></div>
<span class="x" style="left:995.50px;top:180.00px;font-size:16px;line-height:21px;color:#252423;letter-spacing:0.035px;">Visualizations</span>
<span class="x" style="left:994.80px;top:402.00px;font-size:12px;line-height:16px;color:#252423;transform:scaleX(0.9342);transform-origin:0 50%;">Shared axis</span>
<span class="x" style="left:995.50px;top:431.00px;font-size:12px;line-height:16px;color:#252423;transform:scaleX(0.9330);transform-origin:0 50%;">Date</span>
<span class="x" style="left:1003.20px;top:451.00px;font-size:12px;line-height:16px;color:#252423;transform:scaleX(0.9050);transform-origin:0 50%;">Year</span>
<span class="x" style="left:1003.20px;top:470.00px;font-size:12px;line-height:16px;color:#252423;letter-spacing:-0.095px;">Quarter</span>
<span class="x" style="left:1003.20px;top:489.00px;font-size:12px;line-height:16px;color:#252423;letter-spacing:0.309px;">Month</span>
<span class="x" style="left:1003.20px;top:508.00px;font-size:12px;line-height:16px;color:#252423;transform:scaleX(0.9300);transform-origin:0 50%;">Day</span>
<span class="x" style="left:994.80px;top:547.00px;font-size:12px;line-height:16px;color:#252423;letter-spacing:-0.166px;">Column series</span>
<span class="x" style="left:998.70px;top:575.00px;font-size:12px;line-height:16px;color:#252423;letter-spacing:-0.050px;">Add data fields here</span>
<span class="x" style="left:994.80px;top:607.00px;font-size:12px;line-height:16px;color:#252423;letter-spacing:-0.139px;">Column values</span>
<span class="x" style="left:995.50px;top:636.00px;font-size:12px;line-height:16px;color:#252423;letter-spacing:-0.300px;">Loan_disbursed</span>
<span class="x" style="left:994.80px;top:676.00px;font-size:12px;line-height:16px;color:#252423;letter-spacing:-0.251px;">Line values</span>
<!-- p5_vizicons -->
<svg class="a" style="left:0px;top:0px;" width="1281" height="720" viewBox="0 0 1281 720"><g transform="translate(993 219)"><rect x="0.5" y="2" width="4.5" height="4" fill="#ffffff" stroke="#3b3a39" stroke-width="0.9"/><rect x="5" y="2" width="6" height="4" fill="#6fb3ec" stroke="#2b7fc4" stroke-width="0.9"/><rect x="0.5" y="9.5" width="5.5" height="4" fill="#ffffff" stroke="#3b3a39" stroke-width="0.9"/><rect x="6" y="9.5" width="9" height="4" fill="#c2c0be" stroke="#8a8886" stroke-width="0.9"/><path d="M0.5 0v15.5H16" fill="none" stroke="#3b3a39" stroke-width="1.1" /></g><g transform="translate(1021 219)"><rect x="3" y="10" width="4" height="5.5" fill="#ffffff" stroke="#3b3a39" stroke-width="0.9"/><rect x="3" y="4" width="4" height="6" fill="#6fb3ec" stroke="#2b7fc4" stroke-width="0.9"/><rect x="10" y="9" width="4" height="6.5" fill="#ffffff" stroke="#3b3a39" stroke-width="0.9"/><rect x="10" y="1.5" width="4" height="7.5" fill="#c2c0be" stroke="#8a8886" stroke-width="0.9"/><path d="M0.5 0v15.5H16" fill="none" stroke="#3b3a39" stroke-width="1.1" /></g><g transform="translate(1049 219)"><rect x="0.5" y="0.6" width="15" height="4" fill="#6fb3ec" stroke="#2b7fc4" stroke-width="0.9"/><rect x="0.5" y="6.3" width="6.5" height="3" fill="#c2c0be" stroke="#8a8886" stroke-width="0.9"/><rect x="0.5" y="10.8" width="11.5" height="3.2" fill="#ffffff" stroke="#3b3a39" stroke-width="0.9"/><path d="M0.6 0v15.4H16" fill="none" stroke="#3b3a39" stroke-width="1.5" /></g><g transform="translate(1077 219)"><rect x="2" y="0.5" width="3.5" height="15" fill="#6fb3ec" stroke="#2b7fc4" stroke-width="0.9"/><rect x="7" y="7" width="2.5" height="8.5" fill="#ffffff" stroke="#3b3a39" stroke-width="0.9"/><rect x="9.5" y="9" width="2.5" height="6.5" fill="#c2c0be" stroke="#8a8886" stroke-width="0.9"/><rect x="12" y="4" width="3.2" height="11.5" fill="#ffffff" stroke="#3b3a39" stroke-width="0.9"/><path d="M0 15.4H16" fill="none" stroke="#3b3a39" stroke-width="1.4" /></g><g transform="translate(1105 219)"><rect x="0.5" y="2" width="4.5" height="4" fill="#ffffff" stroke="#3b3a39" stroke-width="0.9"/><rect x="5" y="2" width="9.5" height="4" fill="#6fb3ec" stroke="#2b7fc4" stroke-width="0.9"/><rect x="0.5" y="9.5" width="9.5" height="4" fill="#ffffff" stroke="#3b3a39" stroke-width="0.9"/><rect x="10" y="9.5" width="4.5" height="4" fill="#c2c0be" stroke="#8a8886" stroke-width="0.9"/><path d="M0.5 0v15.5H16" fill="none" stroke="#3b3a39" stroke-width="1.1" /></g><g transform="translate(1133 219)"><rect x="2.5" y="12" width="4.5" height="3.5" fill="#ffffff" stroke="#3b3a39" stroke-width="0.9"/><rect x="2.5" y="1.5" width="4.5" height="10.5" fill="#6fb3ec" stroke="#2b7fc4" stroke-width="0.9"/><rect x="10" y="6" width="4.5" height="9.5" fill="#ffffff" stroke="#3b3a39" stroke-width="0.9"/><rect x="10" y="1.5" width="4.5" height="4.5" fill="#c2c0be" stroke="#8a8886" stroke-width="0.9"/><path d="M0.5 0v15.5H16" fill="none" stroke="#3b3a39" stroke-width="1.1" /></g><g transform="translate(993 243)"><path d="M0.5 0v15.5H16" fill="none" stroke="#3b3a39" stroke-width="1.1" /><path d="M0.5 12.3L10.3 2.6 16 8.2 M0.5 10.8L9.6 1.9" fill="none" stroke="#2b7fc4" stroke-width="0.8" /><path d="M0.5 8.6L5.8 3 10 8.2 16 3.2" fill="none" stroke="#3b3a39" stroke-width="1.1" /></g><g transform="translate(1021 243)"><path d="M9.8 6.8L12.6 0.5 15.5 6.1v9H9.8z" fill="#c2c0be" stroke="#8a8886" stroke-width="0.8" /><path d="M0.5 15.5v-4.5l3.6 2.5 5.7-6.7 5.7 8v0.7z" fill="#6fb3ec" stroke="#2b7fc4" stroke-width="0.9" /><path d="M0.5 9L5.5 1.2 9.8 6.8 4.1 13.5 0.5 11z" fill="#ffffff" stroke="#3b3a39" stroke-width="1.0" stroke-linejoin="round"/><path d="M9.8 6.8L15.5 15" fill="none" stroke="#3b3a39" stroke-width="0.9" /></g><g transform="translate(1049 243)"><path d="M0.5 3L5.3 8.2 11.3 1.9 13.4 4H15.5V12.1L11.3 7.5 5.3 13.2 0.5 9z" fill="#6fb3ec" stroke="#2b7fc4" stroke-width="0.9" /><path d="M0.5 6L5.3 11 11.3 4.8 15.5 8.5" fill="none" stroke="#2b7fc4" stroke-width="1" /><path d="M0.5 0v15.5H16" fill="none" stroke="#3b3a39" stroke-width="1.1" /></g><rect x="1075" y="240.5" width="20" height="21" fill="#d6d4d2" stroke="#605e5c" stroke-width="2"/><g transform="translate(1077 243)"><rect x="3" y="11" width="4" height="4.5" fill="#ffffff" stroke="#3b3a39" stroke-width="0.9"/><rect x="3" y="2.5" width="4" height="8.5" fill="#6fb3ec" stroke="#2b7fc4" stroke-width="0.9"/><rect x="10" y="8" width="4" height="7.5" fill="#ffffff" stroke="#3b3a39" stroke-width="0.9"/><rect x="10" y="2.5" width="4" height="5.5" fill="#c2c0be" stroke="#8a8886" stroke-width="0.9"/><path d="M0.5 0v15.5H16" fill="none" stroke="#3b3a39" stroke-width="1.1" /><path d="M1 11l4-3.2 3.2 3.4L15 5" fill="none" stroke="#3b3a39" stroke-width="1.1" /></g><g transform="translate(1105 243)"><rect x="2" y="7" width="4" height="8.5" fill="#6fb3ec" stroke="#2b7fc4" stroke-width="0.9"/><rect x="6.3" y="2" width="3.7" height="13.5" fill="#ffffff" stroke="#3b3a39" stroke-width="0.9"/><rect x="10" y="5" width="4" height="10.5" fill="#c2c0be" stroke="#8a8886" stroke-width="0.9"/><path d="M0.5 0v15.5H16" fill="none" stroke="#3b3a39" stroke-width="1.1" /><path d="M0.5 14L5 8l3.5 4L15.5 4.5" fill="none" stroke="#3b3a39" stroke-width="1.1" /></g><g transform="translate(1133 243)"><path d="M0.5 2.5c3 0 4 4 7.5 4s4.5-4 7.5-4v5c-3 0-4 3-7.5 3s-4.5-3-7.5-3z" fill="#c2c0be" stroke="#8a8886" stroke-width="0.9" /><path d="M0.5 9.5h15v3h-15z" fill="#f5b95f" stroke="#e8912d" stroke-width="0.9" /><path d="M0.5 6c3 0 4 4.5 7.5 4.5s4.5-4.5 7.5-4.5v3.5c-3 0-4 4-7.5 4s-4.5-4-7.5-4z" fill="#6fb3ec" stroke="#2b7fc4" stroke-width="0.9" /><path d="M0.5 0v15.5H16" fill="none" stroke="#3b3a39" stroke-width="1.1" /></g><g transform="translate(993 267)"><rect x="1.5" y="4.8" width="2.5" height="10.7" fill="#ffffff" stroke="#605e5c" stroke-width="0.9"/><rect x="4" y="4.8" width="2.5" height="10.7" fill="#c2c0be" stroke="#8a8886" stroke-width="0.9"/><rect x="6.2" y="10.1" width="5.3" height="5.4" fill="#ffffff" stroke="#605e5c" stroke-width="0.7"/><rect x="9" y="0.8" width="2.5" height="9.3" fill="#1f5f99" stroke="#1f5f99" stroke-width="0.9"/><rect x="11.5" y="0.8" width="3.8" height="14.7" fill="#ffffff" stroke="#3b3a39" stroke-width="0.9"/><path d="M0.5 0v15.5H16" fill="none" stroke="#3b3a39" stroke-width="1.2" /></g><g transform="translate(1021 267)"><path d="M0.3 0.6h15.4v4.2l-0.8 0.7H1.1l-0.8-0.7z M1.3 5.5h13.4v4.2l-0.9 0.8H2.2l-0.9-0.8z M4.3 10.5h7.4v3.6l-1 1.2H5.3l-1-1.2z" fill="#6fb3ec" stroke="#2b7fc4" stroke-width="0.9" stroke-linejoin="round"/></g><g transform="translate(1049 267)"><path d="M0.5 0v15.5H16" fill="none" stroke="#3b3a39" stroke-width="1.1" /><circle cx="4" cy="4.5" r="1.4" fill="#9cc8ee" stroke="#2b7fc4" stroke-width="0.6"/><rect x="7.3" y="6.3" width="2.4" height="2.4" fill="#9cc8ee" stroke="#2b7fc4" stroke-width="0.6"/><circle cx="12.8" cy="2" r="1.6" fill="#3b3a39"/><circle cx="4" cy="12" r="1.6" fill="#3b3a39"/><circle cx="12.8" cy="11" r="1.5" fill="#9cc8ee" stroke="#2b7fc4" stroke-width="0.6"/></g><g transform="translate(1077 267)"><circle cx="8" cy="8" r="7.4" fill="#ffffff" stroke="#3b3a39" stroke-width="1"/><path d="M8 8V0.6A7.4 7.4 0 0 1 13.2 13.3z" fill="#6fb3ec" stroke="#2b7fc4" stroke-width="0.9" /></g><g transform="translate(1105 267)"><circle cx="8" cy="8" r="5.5" fill="none" stroke="#6fb3ec" stroke-width="3.8"/><circle cx="8" cy="8" r="7.4" fill="none" stroke="#2b7fc4" stroke-width="0.8"/><circle cx="8" cy="8" r="3.5" fill="none" stroke="#2b7fc4" stroke-width="0.8"/><path d="M0.6 8A7.4 7.4 0 0 1 8 0.6V4.5A3.5 3.5 0 0 0 4.5 8z" fill="#ffffff" stroke="#2b7fc4" stroke-width="0.8" /></g><g transform="translate(1133 267)"><rect x="0.5" y="0.5" width="6" height="7.5" fill="#6fb3ec" stroke="#2b7fc4" stroke-width="0.9"/><rect x="0.5" y="8" width="6" height="7.5" fill="#6fb3ec" stroke="#2b7fc4" stroke-width="0.9"/><rect x="6.5" y="0.5" width="9" height="4.5" fill="#ffffff" stroke="#8a8886" stroke-width="0.9"/><rect x="6.5" y="5" width="4.5" height="5.5" fill="#ffffff" stroke="#8a8886" stroke-width="0.9"/><rect x="11" y="5" width="4.5" height="3" fill="#c2c0be" stroke="#8a8886" stroke-width="0.9"/><rect x="11" y="8" width="4.5" height="7.5" fill="#ffffff" stroke="#8a8886" stroke-width="0.9"/><rect x="6.5" y="10.5" width="4.5" height="5" fill="#ffffff" stroke="#8a8886" stroke-width="0.9"/></g><g transform="translate(993 291)"><circle cx="8.2" cy="7.3" r="5.5" fill="#ffffff" stroke="#3b3a39" stroke-width="1"/><path d="M4.8 4.6c1-1.5 3-2 4-1.5l-1 2.5 1.5 1-1 2-2-0.5-0.5-2z M10.2 4l2.5 0.5 0.5 3-2 2-1-2.5z M6.7 10.5l2 0.5 1 1.5-2 0.3z" fill="#3f9b51" stroke="#2e7d3e" stroke-width="0.5" /><path d="M5.5 0.8A7 7 0 0 0 8.2 14.3 M8.2 13.5v2 M2 15.5h12.5" fill="none" stroke="#3b3a39" stroke-width="1.0" /></g><g transform="translate(1021 291)"><path d="M0.5 1L5 1.5 6.5 3 10 2 15.5 0.8V9L13 12.5 9 14.5 7.5 15.5 5 13.5 2 12.5 0.5 9z" fill="#c2c0be" stroke="#8a8886" stroke-width="0.8" stroke-linejoin="round"/><path d="M0.5 1L5 1.5 6.5 3 7 7.5 1.5 8 0.5 6z M8 9.5L15.5 7V9L13 12.5 9 14.5 7.5 15.5 7.5 11z" fill="#6fb3ec" stroke="#2b7fc4" stroke-width="0.9" stroke-linejoin="round"/></g><g transform="translate(1049 291)"><path d="M1 11.5a7 7 0 0 1 14 0h-3a4 4 0 0 0-8 0z" fill="#6fb3ec" stroke="#2b7fc4" stroke-width="0.9" /><path d="M1 11.5a7 7 0 0 1 4-6.3l1.3 2.7a4 4 0 0 0-2.3 3.6z" fill="#ffffff" stroke="#3b3a39" stroke-width="0.9" /><path d="M7.5 11.5l3.5-4" fill="none" stroke="#3b3a39" stroke-width="1.3" /><circle cx="7.5" cy="11.5" r="1" fill="#3b3a39"/></g><g transform="translate(1077 291)"><rect x="0.6" y="2" width="14.8" height="12" fill="#ffffff" stroke="#8a8886" stroke-width="1.2"/><rect x="0.6" y="12.2" width="14.8" height="1.8" fill="#8a8886"/><text x="8" y="11" font-size="8.5" text-anchor="middle" fill="#2b7fc4" font-family="Liberation Sans, sans-serif" textLength="11.5" lengthAdjust="spacingAndGlyphs">123</text></g><g transform="translate(1105 291)"><rect x="0.6" y="0.8" width="14.8" height="14.6" fill="#ffffff" stroke="#3b3a39" stroke-width="1.1"/><path d="M3 3v10.5" fill="none" stroke="#c2c0be" stroke-width="1.3" /><path d="M5 4.4h8.6 M5 9.6h8.6" fill="none" stroke="#2b7fc4" stroke-width="1.5" /><path d="M5 6.6h3.8 M5 11.8h3.8" fill="none" stroke="#a19f9d" stroke-width="1.1" /></g><g transform="translate(1133 291)"><rect x="0.6" y="1.3" width="14.8" height="12.5" fill="#ffffff" stroke="#605e5c" stroke-width="1.1"/><path d="M0.2 1.4h15.6" fill="none" stroke="#3b3a39" stroke-width="1.5" /><path d="M2.4 8.3l2.6-4.3 2.6 4.3z" fill="#5cbf6a" stroke="#2e9e48" stroke-width="0.8" /><path d="M8.6 4.2l2.6 4.3 2.6-4.3z" fill="#e8574f" stroke="#c8302a" stroke-width="0.8" /><path d="M2 11h11.8" fill="none" stroke="#c2c0be" stroke-width="1.2" /></g><g transform="translate(993 315)"><rect x="0.5" y="0.8" width="15" height="14.6" fill="#ffffff" stroke="#3b3a39" stroke-width="1.0"/><path d="M0.5 3.3h15" fill="none" stroke="#8a8886" stroke-width="1" /><rect x="3.2" y="5.5" width="2.6" height="2.6" fill="#c2c0be" stroke="#8a8886" stroke-width="0.7"/><rect x="3.2" y="10" width="2.6" height="2.6" fill="#c2c0be" stroke="#8a8886" stroke-width="0.7"/><path d="M9.3 8.5h7l-2.5 3.5v4h-2v-4z" fill="#ffffff" stroke="#3b3a39" stroke-width="1.0" stroke-linejoin="round"/></g><g transform="translate(1021 315)"><rect x="0.6" y="0.8" width="14.8" height="14.6" fill="#ffffff" stroke="#3b3a39" stroke-width="1.0"/><rect x="0.6" y="0.8" width="14.8" height="2.6" fill="#c2c0be"/><rect x="0.6" y="9" width="14.8" height="2" fill="#e1dfdd"/><path d="M0.6 3.6h14.8 M0.6 7.2h14.8 M0.6 11.2h14.8 M5.5 0.8v14.6 M10.5 0.8v14.6" fill="none" stroke="#605e5c" stroke-width="0.8" /></g><g transform="translate(1049 315)"><rect x="0.6" y="0.8" width="14.8" height="14.6" fill="#ffffff" stroke="#3b3a39" stroke-width="1.0"/><rect x="0.6" y="0.8" width="14.8" height="2.6" fill="#c2c0be"/><rect x="10.5" y="3.6" width="4.9" height="3.6" fill="#6fb3ec"/><rect x="5.5" y="7.2" width="9.9" height="4" fill="#6fb3ec"/><rect x="0.6" y="11.2" width="14.8" height="4.2" fill="#6fb3ec"/><path d="M0.6 3.6h14.8 M0.6 7.2h14.8 M0.6 11.2h14.8 M5.5 0.8v14.6 M10.5 0.8v14.6" fill="none" stroke="#2b7fc4" stroke-width="0.8" /></g><g transform="translate(1077 315)"><text x="8" y="13.8" font-size="16" font-weight="bold" text-anchor="middle" fill="#2b7fc4" font-family="Liberation Sans, sans-serif" textLength="9" lengthAdjust="spacingAndGlyphs">R</text></g><g transform="translate(1105 315)"><text x="8" y="11.6" font-size="14.5" font-weight="bold" text-anchor="middle" fill="#2b7fc4" font-family="Liberation Sans, sans-serif" textLength="16.5" lengthAdjust="spacingAndGlyphs">Py</text></g><g transform="translate(1133 315)"><path d="M0.5 0v15.5H16" fill="none" stroke="#3b3a39" stroke-width="1.1" /><path d="M0.5 3h10.5" fill="none" stroke="#2b7fc4" stroke-width="1.2" /><circle cx="12.8" cy="3" r="1.8" fill="#6fb3ec" stroke="#2b7fc4" stroke-width="1"/><path d="M0.5 7h7 M0.5 11h3.5" fill="none" stroke="#605e5c" stroke-width="1" /><circle cx="8.8" cy="7" r="1.2" fill="#ffffff" stroke="#605e5c" stroke-width="0.9"/><circle cx="5.2" cy="11" r="1.2" fill="#ffffff" stroke="#605e5c" stroke-width="0.9"/></g><g transform="translate(993 339)"><path d="M5 8h3.5 M12 2.5H8.5v11H12 M8.5 8H12" fill="none" stroke="#2b7fc4" stroke-width="1" /><rect x="0.5" y="6" width="4.5" height="4" fill="#6fb3ec" stroke="#2b7fc4" stroke-width="0.9"/><rect x="11" y="0.5" width="4.5" height="4" fill="#6fb3ec" stroke="#2b7fc4" stroke-width="0.9"/><rect x="11" y="6" width="4.5" height="4" fill="#6fb3ec" stroke="#2b7fc4" stroke-width="0.9"/><rect x="11" y="11.5" width="4.5" height="4" fill="#6fb3ec" stroke="#2b7fc4" stroke-width="0.9"/></g><g transform="translate(1021 339)"><path d="M0.6 0.8h14.8v10.2H6.5l-3.7 3.6v-3.6H0.6z" fill="#ffffff" stroke="#2b7fc4" stroke-width="1.1" stroke-linejoin="round"/></g><g transform="translate(1049 339)"><rect x="1.5" y="6.3" width="1.6" height="1.6" fill="#3b3a39"/><rect x="7.2" y="6.3" width="1.6" height="1.6" fill="#3b3a39"/><rect x="12.9" y="6.3" width="1.6" height="1.6" fill="#3b3a39"/></g></svg>
<!-- p6_fields -->
<div class="a" style="left:1164px;top:165px;width:117px;height:541px;background:#f3f2f1;"></div>
<div class="a" style="left:1164px;top:165px;width:117px;height:541px;overflow:hidden"><svg class="a" style="left:-1164px;top:-165px;" width="1281" height="720" viewBox="0 0 1281 720"><rect x="1168.5" y="217.5" width="130" height="29" rx="2" fill="#ffffff" stroke="#c8c6c4" stroke-width="1"/><circle cx="1190.5" cy="229.3" r="4.6" fill="none" stroke="#252423" stroke-width="1.1"/><path d="M1187 232.8l-6.4 6" stroke="#252423" stroke-width="1.1"/><path d="M1164 251.5H1281" stroke="#e1dfdd" stroke-width="1"/><path d="M1168 277.5l5.9-5.8 5.9 5.8" fill="none" stroke="#605e5c" stroke-width="1"/><rect x="1187.5" y="269.5" width="12" height="11" fill="#ffffff" stroke="#252423" stroke-width="1.1"/><rect x="1187.5" y="269.5" width="12" height="2.8" fill="#252423"/><path d="M1187.5 276.2h12 M1191.5 272v8.5 M1195.5 272v8.5" stroke="#252423" stroke-width="1"/><circle cx="1200" cy="282" r="5.8" fill="#f2c811"/><path d="M1197.6 282l1.7 1.8 3-3.4" fill="none" stroke="#252423" stroke-width="1.1"/><path d="M1177 325.8l5.7 5.6 5.7-5.6" fill="none" stroke="#605e5c" stroke-width="1"/><rect x="1212.5" y="322.5" width="11.5" height="11" fill="#ffffff" stroke="#252423" stroke-width="1.1"/><path d="M1212.5 325.5h11.5 M1215.5 320.8v3 M1221 320.8v3" stroke="#252423" stroke-width="1.1"/><path d="M1215 328h1.5 M1217.8 328h1.5 M1220.6 328h1.5 M1215 330.8h1.5 M1217.8 330.8h1.5" stroke="#252423" stroke-width="1.2"/><circle cx="1224" cy="334.8" r="5.8" fill="#f2c811"/><path d="M1221.6 334.8l1.7 1.8 3-3.4" fill="none" stroke="#252423" stroke-width="1.1"/><rect x="1196.5" y="298.60" width="11" height="11" rx="1.5" fill="#f8f7f6" stroke="#605e5c" stroke-width="1"/><path d="M1221.2 301.70v-1.6h-7.4l3.9 4.4-3.9 4.4h7.4v-1.6" fill="none" stroke="#252423" stroke-width="1.3" stroke-linejoin="miter"/><rect x="1196.5" y="322.63" width="11" height="11" rx="1.5" fill="#f2c811" stroke="#f2c811" stroke-width="1"/><path d="M1199.2 328.13l2 2 3.6-4" fill="none" stroke="#252423" stroke-width="1.1"/><rect x="1196.5" y="346.66" width="11" height="11" rx="1.5" fill="#f8f7f6" stroke="#605e5c" stroke-width="1"/><path d="M1221.2 349.76v-1.6h-7.4l3.9 4.4-3.9 4.4h7.4v-1.6" fill="none" stroke="#252423" stroke-width="1.3" stroke-linejoin="miter"/><rect x="1196.5" y="370.69" width="11" height="11" rx="1.5" fill="#f8f7f6" stroke="#605e5c" stroke-width="1"/><rect x="1196.5" y="394.72" width="11" height="11" rx="1.5" fill="#f8f7f6" stroke="#605e5c" stroke-width="1"/><path d="M1221.2 397.82v-1.6h-7.4l3.9 4.4-3.9 4.4h7.4v-1.6" fill="none" stroke="#252423" stroke-width="1.3" stroke-linejoin="miter"/><rect x="1196.5" y="418.75" width="11" height="11" rx="1.5" fill="#f8f7f6" stroke="#605e5c" stroke-width="1"/><rect x="1196.5" y="442.78" width="11" height="11" rx="1.5" fill="#f8f7f6" stroke="#605e5c" stroke-width="1"/><path d="M1221.2 445.88v-1.6h-7.4l3.9 4.4-3.9 4.4h7.4v-1.6" fill="none" stroke="#252423" stroke-width="1.3" stroke-linejoin="miter"/><rect x="1196.5" y="466.81" width="11" height="11" rx="1.5" fill="#f2c811" stroke="#f2c811" stroke-width="1"/><path d="M1199.2 472.31l2 2 3.6-4" fill="none" stroke="#252423" stroke-width="1.1"/><path d="M1221.2 469.91v-1.6h-7.4l3.9 4.4-3.9 4.4h7.4v-1.6" fill="none" stroke="#252423" stroke-width="1.3" stroke-linejoin="miter"/><rect x="1196.5" y="490.84" width="11" height="11" rx="1.5" fill="#f2c811" stroke="#f2c811" stroke-width="1"/><path d="M1199.2 496.34l2 2 3.6-4" fill="none" stroke="#252423" stroke-width="1.1"/><path d="M1221.2 493.94v-1.6h-7.4l3.9 4.4-3.9 4.4h7.4v-1.6" fill="none" stroke="#252423" stroke-width="1.3" stroke-linejoin="miter"/><rect x="1196.5" y="514.87" width="11" height="11" rx="1.5" fill="#f8f7f6" stroke="#605e5c" stroke-width="1"/><rect x="1196.5" y="538.90" width="11" height="11" rx="1.5" fill="#f8f7f6" stroke="#605e5c" stroke-width="1"/><path d="M1221.2 542.00v-1.6h-7.4l3.9 4.4-3.9 4.4h7.4v-1.6" fill="none" stroke="#252423" stroke-width="1.3" stroke-linejoin="miter"/><rect x="1196.5" y="562.93" width="11" height="11" rx="1.5" fill="#f8f7f6" stroke="#605e5c" stroke-width="1"/><path d="M1221.2 566.03v-1.6h-7.4l3.9 4.4-3.9 4.4h7.4v-1.6" fill="none" stroke="#252423" stroke-width="1.3" stroke-linejoin="miter"/><rect x="1196.5" y="586.96" width="11" height="11" rx="1.5" fill="#f8f7f6" stroke="#605e5c" stroke-width="1"/><rect x="1196.5" y="610.99" width="11" height="11" rx="1.5" fill="#f8f7f6" stroke="#605e5c" stroke-width="1"/><path d="M1221.2 614.09v-1.6h-7.4l3.9 4.4-3.9 4.4h7.4v-1.6" fill="none" stroke="#252423" stroke-width="1.3" stroke-linejoin="miter"/><rect x="1196.5" y="635.02" width="11" height="11" rx="1.5" fill="#f8f7f6" stroke="#605e5c" stroke-width="1"/><rect x="1196.5" y="659.05" width="11" height="11" rx="1.5" fill="#f8f7f6" stroke="#605e5c" stroke-width="1"/><path d="M1221.2 662.15v-1.6h-7.4l3.9 4.4-3.9 4.4h7.4v-1.6" fill="none" stroke="#252423" stroke-width="1.3" stroke-linejoin="miter"/><rect x="1196.5" y="683.08" width="11" height="11" rx="1.5" fill="#f8f7f6" stroke="#605e5c" stroke-width="1"/><path d="M1221.2 686.18v-1.6h-7.4l3.9 4.4-3.9 4.4h7.4v-1.6" fill="none" stroke="#252423" stroke-width="1.3" stroke-linejoin="miter"/></svg></div>
<span class="x" style="left:1233.30px;top:297.00px;font-size:12px;line-height:16px;color:#252423;letter-spacing:-0.278px;">Age</span>
<span class="x" style="left:1233.30px;top:321.00px;font-size:12px;line-height:16px;color:#252423;letter-spacing:-0.186px;-webkit-text-stroke:0.45px #252423;">Date</span>
<span class="x" style="left:1233.30px;top:345.00px;font-size:12px;line-height:16px;color:#252423;transform:scaleX(0.9240);transform-origin:0 50%;">Day_month</span>
<span class="x" style="left:1233.30px;top:369.00px;font-size:12px;line-height:16px;color:#252423;transform:scaleX(0.9420);transform-origin:0 50%;">Education</span>
<span class="x" style="left:1233.30px;top:393.00px;font-size:12px;line-height:16px;color:#252423;letter-spacing:-0.113px;">Feedback</span>
<span class="x" style="left:1233.30px;top:417.00px;font-size:12px;line-height:16px;color:#252423;letter-spacing:-0.288px;">Gender</span>
<span class="x" style="left:1233.30px;top:441.00px;font-size:12px;line-height:16px;color:#252423;letter-spacing:-0.150px;">Income</span>
<span class="x" style="left:1233.30px;top:465.00px;font-size:12px;line-height:16px;color:#252423;transform:scaleX(0.9370);transform-origin:0 50%;">Interest_rate</span>
<span class="x" style="left:1233.30px;top:489.00px;font-size:12px;line-height:16px;color:#252423;transform:scaleX(0.9450);transform-origin:0 50%;">Loan_disbursed</span>
<span class="x" style="left:1233.30px;top:513.00px;font-size:12px;line-height:16px;color:#252423;letter-spacing:0.309px;">Month</span>
<span class="x" style="left:1233.30px;top:537.00px;font-size:12px;line-height:16px;color:#252423;letter-spacing:-0.162px;">Outstanding</span>
<span class="x" style="left:1233.30px;top:561.00px;font-size:12px;line-height:16px;color:#252423;transform:scaleX(0.9370);transform-origin:0 50%;">Promo_Code</span>
<span class="x" style="left:1233.30px;top:585.00px;font-size:12px;line-height:16px;color:#252423;transform:scaleX(0.9440);transform-origin:0 50%;">Purpose</span>
<span class="x" style="left:1233.30px;top:609.00px;font-size:12px;line-height:16px;color:#252423;letter-spacing:-0.095px;">Quarter</span>
<span class="x" style="left:1233.30px;top:633.00px;font-size:12px;line-height:16px;color:#252423;transform:scaleX(0.9400);transform-origin:0 50%;">Weekday</span>
<span class="x" style="left:1233.30px;top:657.00px;font-size:12px;line-height:16px;color:#252423;transform:scaleX(0.9400);transform-origin:0 50%;">Weeknumber</span>
<span class="x" style="left:1233.30px;top:681.00px;font-size:12px;line-height:16px;color:#252423;transform:scaleX(0.8830);transform-origin:0 50%;">Year</span>
<span class="x" style="left:1176.30px;top:179.00px;font-size:16px;line-height:21px;color:#252423;letter-spacing:-0.236px;">Fields</span>
<span class="x" style="left:1204.20px;top:224.00px;font-size:12.5px;line-height:16px;color:#3b3a39;letter-spacing:-0.361px;">Search</span>
<span class="x" style="left:1212.50px;top:266.00px;font-size:12px;line-height:16px;color:#252423;letter-spacing:-0.317px;">BIData</span>
</div>
</body>
</html>
